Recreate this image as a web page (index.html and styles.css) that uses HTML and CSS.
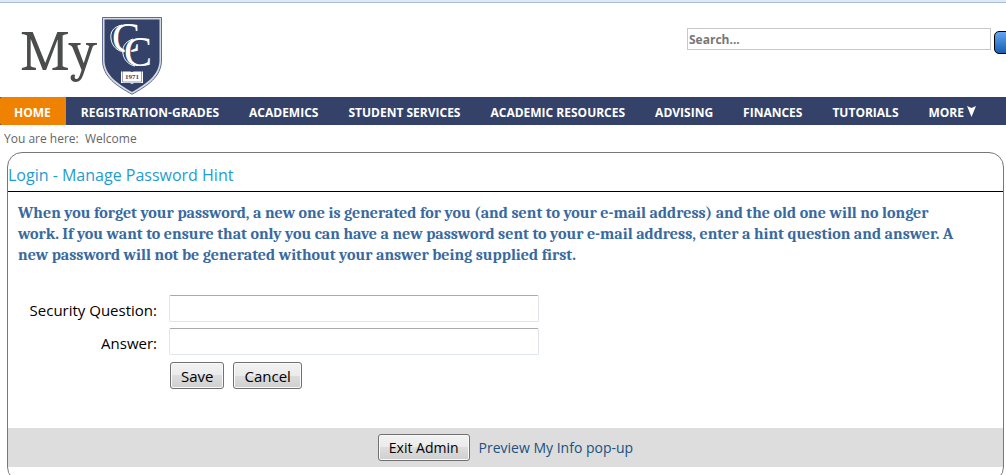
FILE: index.html
```html
<!DOCTYPE html>
<html lang="en">

<head>
    <meta charset="utf-8">
    <meta name="viewport" content="width=device-width, initial-scale=1.0">
    <title>Login - Manage Password Hint</title>
    <link rel="stylesheet" href="styles.css">
</head>

<body>
    <header class="header">
        <a class="logo" href="#">
            <span class="logo-text">My</span>
            <!-- college shield -->
            <svg class="shield" width="60" height="78" viewBox="0 0 60 78" aria-hidden="true">
                <path d="M.5 .5H59.500V43C59.500 60 45 69 30 77.300C15 69 .5 60 .5 43Z" fill="#d5dae5" stroke="#5f6c8f"/>
                <path d="M2.500 2.500H57.500V43C57.500 58 44 67 30 75C16 67 2.500 58 2.500 43Z" fill="#34426a"/>
                <text class="shield-letter" x="10" y="35">C</text>
                <path d="M20 8C11 10 8 15 9 22C10 29 15 34 22 35" fill="none" stroke="#fff"/>
                <text class="shield-letter" x="22" y="49">C</text>
                <path d="M31 22C22 25 20 31 21 37C22 43 27 48 33 49" fill="none" stroke="#fff"/>
                <path d="M19 54.500H28L30 55L32 54.500H41V66H32L30 67L28 66H19Z" fill="#fff"/>
                <path d="M20.500 53.500V65H39.500V53.500" fill="none" stroke="#34426a" stroke-width=".5"/>
                <text class="shield-year" x="30" y="62" text-anchor="middle">1971</text>
            </svg>
        </a>
        <form class="search">
            <input class="search-box" type="text" placeholder="Search..." aria-label="Search">
            <button class="search-btn" type="button" aria-label="Search"></button>
        </form>
    </header>

    <nav class="menu">
        <a class="menu-item active" href="#">HOME</a>
        <a class="menu-item" href="#">REGISTRATION-GRADES</a>
        <a class="menu-item" href="#">ACADEMICS</a>
        <a class="menu-item" href="#">STUDENT SERVICES</a>
        <a class="menu-item" href="#">ACADEMIC RESOURCES</a>
        <a class="menu-item" href="#">ADVISING</a>
        <a class="menu-item" href="#">FINANCES</a>
        <a class="menu-item" href="#">TUTORIALS</a>
        <a class="menu-item" href="#">MORE
            <svg class="arrow" width="9" height="11" viewBox="0 0 9 11" aria-hidden="true">
                <path d="M0 0L4.500 2L9 0L4.500 11Z" fill="#fff"/>
            </svg>
        </a>
    </nav>

    <div class="breadcrumb">You are here:&nbsp; Welcome</div>

    <main class="panel">
        <h1 class="panel-title">Login - Manage Password Hint</h1>
        <p class="hint-text">When you forget your password, a new one is generated for you (and sent to your e-mail address) and the old one will no longer work. If you want to ensure that only you can have a new password sent to your e-mail address, enter a hint question and answer. A new password will not be generated without your answer being supplied first.</p>

        <form class="hint-form">
            <label for="question">Security Question:</label>
            <input class="field" type="text" id="question" name="question">
            <label for="answer">Answer:</label>
            <input class="field" type="text" id="answer" name="answer">
            <div class="form-buttons">
                <button class="btn" type="button">Save</button>
                <button class="btn" type="button">Cancel</button>
            </div>
        </form>

        <div class="admin-bar">
            <button class="btn" type="button">Exit Admin</button>
            <a class="preview-link" href="#">Preview My Info pop-up</a>
        </div>
    </main>
</body>

</html>
```
FILE: styles.css
```css
* {
    box-sizing: border-box;
}

body {
    margin: 0;
    border-top: 2px solid #dce9f8;
    background-color: #fff;
    font-family: "Open Sans", sans-serif;
    font-size: 15px;
    color: #000;
    overflow-x: hidden;
}

/* header */
.header {
    display: flex;
    justify-content: space-between;
    align-items: flex-start;
    height: 95px;
    border-top: 1px solid #a9bbd5;
    overflow: hidden;
}

.logo {
    display: flex;
    padding: 14px 0 0 20px;
    gap: 5px;
    text-decoration: none;
}

.logo-text {
    font-family: Cambria, "Liberation Serif", serif;
    font-size: 56px;
    line-height: 70px;
    color: #4a4d4c;
}

.shield-letter {
    font-family: "Liberation Serif", serif;
    font-size: 42px;
    fill: #fff;
    stroke: #34426a;
    stroke-width: 2px;
    paint-order: stroke;
}

.shield-year {
    font-family: "Liberation Serif", serif;
    font-size: 7px;
    font-weight: bold;
    fill: #34426a;
}

.search {
    display: flex;
    gap: 3px;
    margin: 25px -20px 0 0;
}

.search-box {
    width: 304px;
    height: 22px;
    padding: 0 1px;
    border: 1px solid #c8c8c8;
    font-family: inherit;
    font-size: 12px;
    font-weight: bold;
}

.search-box::placeholder {
    color: #777;
}

.search-btn {
    width: 32px;
    height: 23px;
    margin-top: 3px;
    border: 1px solid #000;
    border-radius: 5px;
    background: linear-gradient(#62a5f3, #1660b0);
}

/* main menu */
.menu {
    display: flex;
    height: 28px;
    background-color: #34426a;
    white-space: nowrap;
}

.menu-item {
    padding: 0 15px;
    font-size: 12px;
    font-weight: bold;
    line-height: 32px;
    color: #fff;
    text-decoration: none;
}

.menu-item.active {
    height: 28px;
    padding-left: 14px;
    background-color: #ef8200;
    border-radius: 2px 0 0 2px;
}

.breadcrumb {
    padding-left: 4px;
    font-size: 12px;
    line-height: 27px;
    color: #666;
}

/* content panel */
.panel {
    margin: 0 2px 0 7px;
    padding-bottom: 14px;
    border: 1px solid #777;
    border-radius: 15px;
}

.panel-title {
    margin: 0;
    padding: 8px 0 2px;
    border-bottom: 1px solid #000;
    font-size: 16px;
    font-weight: normal;
    line-height: 28px;
    color: #1f9ccf;
}

.hint-text {
    margin: 0;
    padding: 11px 38px 29px 10px;
    font-family: Cambria, "Liberation Serif", serif;
    font-size: 16px;
    font-weight: bold;
    line-height: 21px;
    color: #38699f;
}

.hint-form {
    display: grid;
    grid-template-columns: 149px 370px;
    column-gap: 12px;
    row-gap: 6px;
}

.hint-form label {
    line-height: 30px;
    height: 27px;
    text-align: right;
}

.field {
    height: 27px;
    border: 1px solid #dfe4ee;
    border-top-color: #a8a9ae;
    border-radius: 2px;
    font: inherit;
}

.form-buttons {
    display: flex;
    grid-column: 2;
    gap: 9px;
    padding: 1px;
}

.btn {
    height: 27px;
    padding: 0 10px;
    border: 1px solid #707070;
    border-radius: 3px;
    background: linear-gradient(#f2f2f2 0%, #ebebeb 50%, #dddddd 50%, #cfcfcf 100%);
    box-shadow: inset 0 0 0 1px #fafafa;
    font-family: inherit;
    font-size: 14px;
    color: #000;
}

.form-buttons .btn {
    font-size: 15px;
}

.admin-bar {
    display: flex;
    justify-content: center;
    align-items: center;
    gap: 9px;
    height: 39px;
    margin-top: 38px;
    background-color: #ddd;
}

.preview-link {
    font-size: 14px;
    color: #205081;
    text-decoration: none;
}
```
